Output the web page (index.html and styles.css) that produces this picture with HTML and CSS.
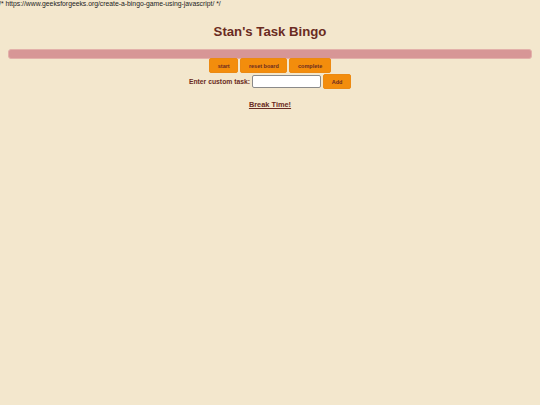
FILE: index.html
```html
<!DOCTYPE html>
<html>
<head>
<meta charset="utf-8">
<link rel="stylesheet" href="styles.css">
</head>
<body>
<div class="comment">/* https://www.geeksforgeeks.org/create-a-bingo-game-using-javascript/ */</div>
<h1 class="title">Stan's Task Bingo</h1>
<div class="bar"></div>
<div class="controls">
  <button class="btn">start</button>
  <button class="btn">reset board</button>
  <button class="btn">complete</button>
</div>
<div class="custom">
  <label class="label" for="task">Enter custom task:</label>
  <input class="input" id="task" type="text">
  <button class="btn add">Add</button>
</div>
<div class="break"><a class="break-link" href="#">Break Time!</a></div>
</body>
</html>
```
FILE: styles.css
```css
html, body {
  margin: 0;
  padding: 0;
  background: #f3e7cd;
  font-family: "Liberation Sans", Arial, sans-serif;
  color: #6a2b22;
  height: 100%;
}
.comment {
  font-size: 6.8px;
  line-height: 8px;
  color: #222;
  margin-left: -1px;
}
.title {
  margin: 16px 0 0;
  font-size: 13.2px;
  line-height: 16px;
  text-align: center;
  font-weight: bold;
  color: #6a2b22;
}
.bar {
  margin: 9px 8px 0;
  height: 8px;
  background: #d79696;
  border: 1px solid #e3b1aa;
  border-radius: 3px;
}
.controls {
  display: flex;
  justify-content: center;
  gap: 2px;
  margin-top: -1px;
}
.btn {
  font-family: "Liberation Sans", Arial, sans-serif;
  font-size: 5.5px;
  font-weight: bold;
  color: #6a2b22;
  background: #f38d0c;
  border: 1px solid #ec8a12;
  border-radius: 2px;
  height: 15px;
  padding: 0 7.6px;
  margin: 0;
}
.custom {
  display: flex;
  justify-content: center;
  align-items: center;
  margin-top: 1px;
  gap: 2px;
}
.label {
  font-size: 6.8px;
  font-weight: bold;
  color: #6a2b22;
}
.input {
  width: 67px;
  height: 11px;
  padding: 0;
  margin: 0;
  border: 1px solid #8a8a8a;
  border-radius: 2px;
  background: #fff;
}
.add {
  width: 28px;
  padding: 0;
}
.break {
  text-align: center;
  margin-top: 4px;
}
.break-link {
  font-size: 7.4px;
  font-weight: bold;
  color: #6a2b22;
  text-decoration: underline;
}
```
